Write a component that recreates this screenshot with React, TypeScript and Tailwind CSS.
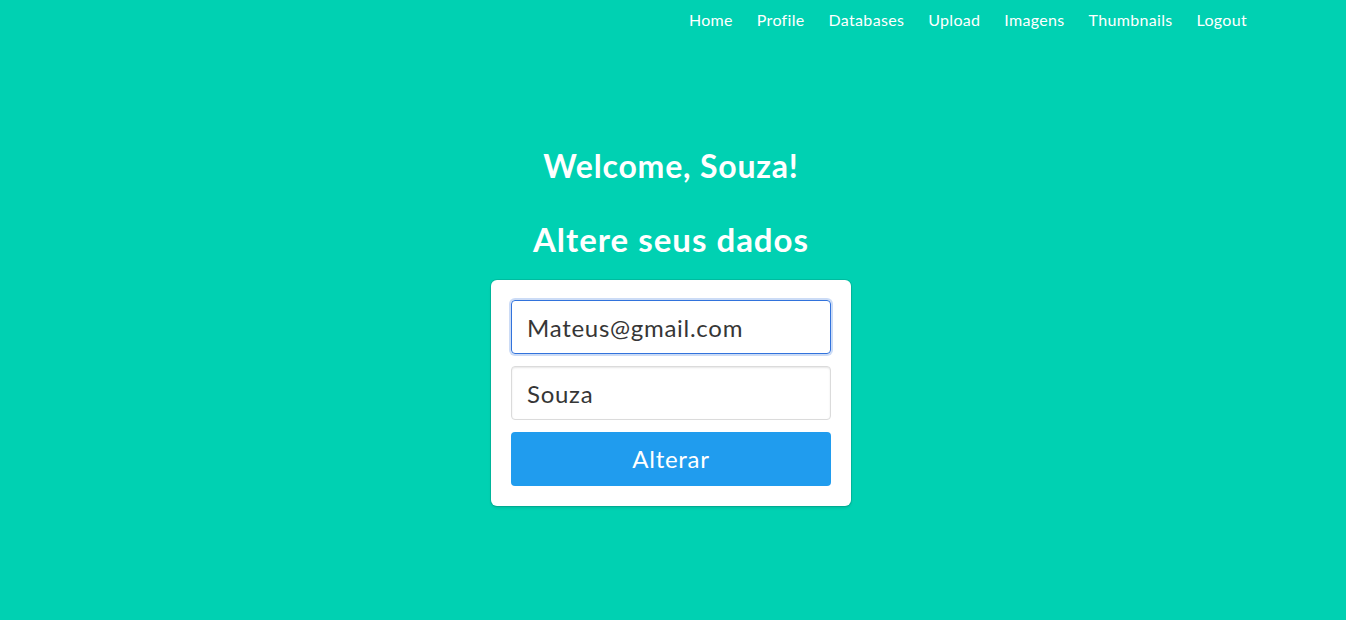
import React from 'react';

const links = ['Home', 'Profile', 'Databases', 'Upload', 'Imagens', 'Thumbnails', 'Logout'];

const App: React.FC = () => {
  return (
    <div className="min-h-[620px] bg-[#00d1b2] font-['Lato','Open_Sans',sans-serif]">
      <nav className="flex justify-end h-10 pr-[87px]">
        {links.map(link => (
          <a key={link} href="#" className="px-3 flex items-center text-[16px] tracking-[0.02em] text-white">
            {link}
          </a>
        ))}
      </nav>

      <main className="flex flex-col items-center pt-[106px] pr-1">
        <h1 className="text-[32px] leading-[40px] font-bold tracking-[0.025em] text-white">Welcome, Souza!</h1>
        <h2 className="mt-[33px] text-[33px] leading-[40px] font-bold tracking-[0.03em] text-white">Altere seus dados</h2>

        <div className="mt-[21px] w-[360px] bg-white rounded-md p-5 shadow-[0_2px_3px_rgba(10,10,10,0.1),0_0_0_1px_rgba(10,10,10,0.1)] flex flex-col gap-3">
          <input
            defaultValue="Mateus@gmail.com"
            className="h-[54px] w-full rounded border border-[#3273dc] px-[15px] text-[24px] tracking-[0.03em] text-[#363636] shadow-[0_0_0_2px_rgba(50,115,220,0.25)] outline-none"
          />
          <input
            defaultValue="Souza"
            className="h-[54px] w-full rounded border border-[#dbdbdb] px-[15px] text-[24px] tracking-[0.03em] text-[#363636] shadow-[inset_0_1px_2px_rgba(10,10,10,0.1)] outline-none"
          />
          <button className="h-[54px] w-full rounded bg-[#209cee] text-[24px] tracking-[0.03em] text-white">Alterar</button>
        </div>
      </main>
    </div>
  );
};

export default App;
